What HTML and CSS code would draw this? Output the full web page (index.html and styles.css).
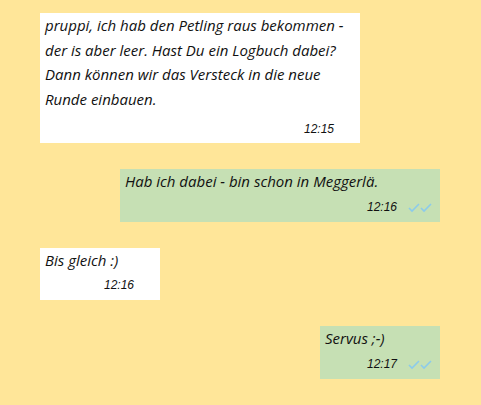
FILE: index.html
```html
<!DOCTYPE html>
<html lang="de">
<head>
<meta charset="UTF-8">
<meta name="viewport" content="width=device-width, initial-scale=1.0">
<title>Chat</title>
<link rel="stylesheet" href="styles.css">
</head>
<body>

<div class="chat">
  <!-- eingehend -->
  <div class="bubble in wide multi">
    <p class="text">pruppi, ich hab den Petling raus bekommen - der is aber leer. Hast Du ein Logbuch dabei? Dann können wir das Versteck in die neue Runde einbauen.</p>
    <div class="meta"><span class="time">12:15</span></div>
  </div>

  <!-- ausgehend -->
  <div class="bubble out wide">
    <p class="text">Hab ich dabei - bin schon in Meggerlä.</p>
    <div class="meta">
      <span class="time">12:16</span>
      <svg class="ticks" width="24" height="12" viewBox="0 0 24 12">
        <path d="M1 7 L4 10 L11 3" />
        <path d="M13 7 L16 10 L23 3" />
      </svg>
    </div>
  </div>

  <div class="bubble in small">
    <p class="text">Bis gleich :)</p>
    <div class="meta"><span class="time">12:16</span></div>
  </div>

  <div class="bubble out small">
    <p class="text">Servus ;-)</p>
    <div class="meta">
      <span class="time">12:17</span>
      <svg class="ticks" width="24" height="12" viewBox="0 0 24 12">
        <path d="M1 7 L4 10 L11 3" />
        <path d="M13 7 L16 10 L23 3" />
      </svg>
    </div>
  </div>
</div>

</body>
</html>
```

FILE: styles.css
```css
body {
  margin: 0;
  background: #ffe699;
  font-family: "Comic Sans MS", "Open Sans", sans-serif;
  color: #111;
}

.chat {
  display: flex;
  flex-direction: column;
  gap: 26px;
  padding: 13px 41px 20px 40px;
}

.bubble {
  padding: 0 8px 2px 5px;
  box-sizing: border-box;
}

.bubble.wide {
  width: 320px;
}

.bubble.small {
  width: 120px;
}

.in {
  align-self: flex-start;
  background: #fff;
}

.out {
  align-self: flex-end;
  background: #c6e0b4;
}

.text {
  margin: 0;
  font-size: 15px;
  font-style: italic;
  line-height: 24.5px;
}

.meta {
  display: flex;
  justify-content: flex-end;
  align-items: center;
  gap: 11px;
  height: 26px;
}

.in .meta {
  padding-right: 18px;
}

.multi .meta {
  margin-top: 5px;
}

.multi {
  padding-bottom: 1px;
}

.time {
  font-family: "Liberation Sans", Arial, sans-serif;
  font-size: 12px;
  font-style: italic;
}

.ticks {
  width: 24px;
  height: 12px;
}

.ticks path {
  fill: none;
  stroke: #8ccbeb;
  stroke-width: 1.6;
}
```
